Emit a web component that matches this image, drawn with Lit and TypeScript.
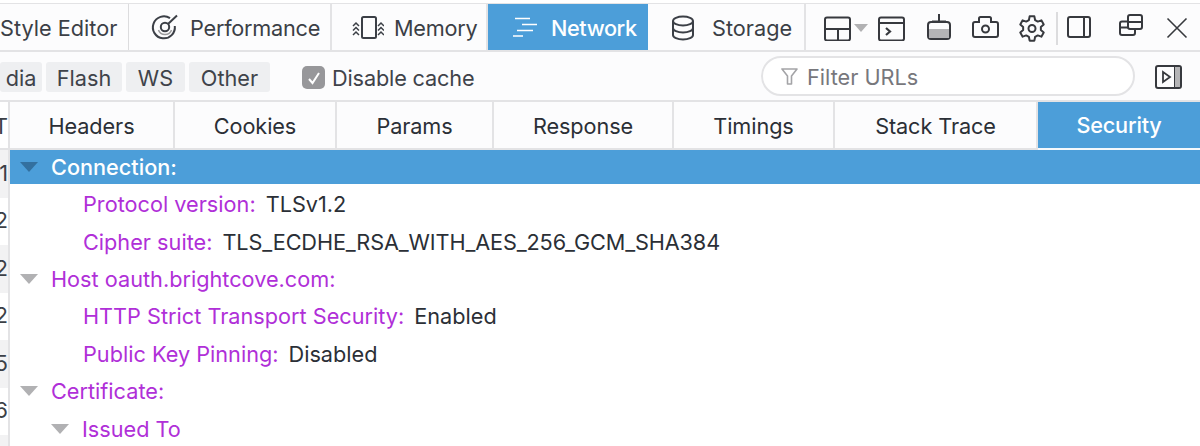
import { LitElement, html, css, svg } from 'lit';
import { customElement } from 'lit/decorators.js';

const icon = (w: number, h: number, body: unknown) => html`<svg width=${w} height=${h} viewBox="0 0 ${w} ${h}" fill="none" stroke="currentColor" stroke-width="2">${body}</svg>`;

// six rounded teeth round the centre of the settings icon
const gearPath = () => {
  const pt = (r: number, deg: number) => {
    const a = (deg * Math.PI) / 180;
    return `${(13 + r * Math.cos(a)).toFixed(2)} ${(13.5 + r * Math.sin(a)).toFixed(2)}`;
  };
  const parts: string[] = [];
  for (let i = 0; i < 6; i++) {
    const a = i * 60 - 90;
    parts.push(pt(9, a - 20), pt(12.4, a - 11), pt(12.4, a + 11), pt(9, a + 20));
  }
  return `M${parts.join('L')}Z`;
};

const chevrons = (x: number, dir: number) =>
  [8, 12.5, 17].map((y) => svg`<path d="M${x} ${y + 3}l${dir * 3} -3 ${dir * 3} 3" stroke-width="1.500"/>`);

const icons = {
  perf: icon(30, 30, svg`<path d="M20 5.200A11 11 0 1 0 24.800 13" /><circle cx="15" cy="14" r="4.200"/><path d="M18 11L27 2.500"/><path d="M8.500 17c1 3 3.500 4.500 6.500 4.500s5.500-1.500 6.500-4.500" stroke-width="1.500" stroke="#9a9a9c"/>`),
  memory: icon(34, 26, svg`<rect x="12" y="2" width="14" height="21" rx="1.500"/>${chevrons(3, 1)}${chevrons(28, 1)}`),
  network: icon(24, 22, svg`<path d="M2 1.500h15M9 7.500h15M4 13.500h16M0 19h10" stroke-width="1.600"/>`),
  storage: icon(24, 26, svg`<ellipse cx="12" cy="6" rx="10" ry="4.500"/><path d="M2 6v14c0 2.500 4.500 4.500 10 4.500s10-2 10-4.500V6M2 13c0 2.500 4.500 4.500 10 4.500s10-2 10-4.500"/>`),
  split: icon(28, 26, svg`<rect x="1" y="2.500" width="25" height="23" rx="2"/><path d="M1 14h25M14 14v11"/>`),
  console: icon(28, 26, svg`<rect x="1" y="2.500" width="25" height="23" rx="2"/><path d="M1 8h25"/><path d="M8 13l4 3.500-4 3.500" stroke-width="2.200"/>`),
  paint: icon(24, 28, svg`<path d="M12 0v8M5 7.500h14"/><rect x="1" y="8" width="22" height="17" rx="3"/><rect x="2" y="15" width="20" height="9" fill="#b4b4b6" stroke="none"/>`),
  camera: icon(28, 26, svg`<path d="M3 7h4V3.500A1.500 1.500 0 0 1 8.500 2h9A1.500 1.500 0 0 1 19 3.500V7h5a2 2 0 0 1 2 2v11a2 2 0 0 1-2 2H3a2 2 0 0 1-2-2V9a2 2 0 0 1 2-2z"/><circle cx="13.500" cy="14" r="3.500"/>`),
  gear: icon(26, 27, svg`<path d=${gearPath()} stroke-linejoin="round"/><circle cx="13" cy="13.500" r="3.500"/>`),
  dock: icon(24, 24, svg`<rect x="1" y="1" width="22" height="20" rx="2"/><path d="M17 1v20"/>`),
  windows: icon(24, 28, svg`<rect x="9" y="1" width="14" height="14" rx="2"/><path d="M9 8h14"/><path d="M9 7.500H3a2 2 0 0 0-2 2V19a2 2 0 0 0 2 2h11a2 2 0 0 0 2-2v-4M1 13.500h8"/>`),
  close: icon(22, 22, svg`<path d="M1.500 1.500l19 19M20.500 1.500l-19 19" stroke-width="1.600"/>`),
  funnel: icon(18, 20, svg`<path d="M1 2h15l-5.500 7v8h-4V9z" stroke-width="1.600" stroke-linejoin="round"/>`),
  sidebar: icon(28, 26, svg`<rect x="1" y="2" width="25" height="22" rx="2"/><path d="M20 2v22"/><rect x="20" y="3" width="5" height="20" fill="#b4b4b6" stroke="none"/><path d="M8 8l7 5-7 5z" stroke-width="1.800"/>`),
  check: icon(14, 14, svg`<path d="M2 8l3.500 4L12 2" stroke="#fff" stroke-width="2"/>`),
};

const mainTabs = [
  { label: 'Performance', w: 203, pad: 21, gap: 10, ic: icons.perf },
  { label: 'Memory', w: 156, pad: 18, gap: 10, ic: icons.memory },
  { label: 'Network', w: 160, pad: 25, gap: 14, ic: icons.network, on: true },
  { label: 'Storage', w: 156, pad: 23, gap: 17, ic: icons.storage },
];

const subTabs = [
  ['Headers', 165], ['Cookies', 162], ['Params', 157], ['Response', 180], ['Timings', 161], ['Stack Trace', 203], ['Security', 162],
] as const;

const gutter = [
  ['1', true], ['2', false], ['2', true], ['2', false], ['5', true], ['6', false], ['', true],
] as const;

@customElement('app-root')
export class AppRoot extends LitElement {
  static styles = css`
    :host {
      display: block;
      width: 1200px;
      height: 446px;
      overflow: hidden;
      background: #fff;
      font-family: Inter, "Liberation Sans", sans-serif;
      font-size: 21.7px;
      color: #2b2f36;
    }
    .toolbar {
      display: flex;
      align-items: stretch;
      height: 46px;
      margin-top: 3px;
      border-top: 1px solid #e3e3e5;
      border-bottom: 2px solid #e3e3e5;
      background: #fcfcfd;
    }
    .tab0 { width: 128px; display: flex; align-items: center; padding-top: 2px; border-right: 1px solid #dcdcde; white-space: nowrap; color: #3b3f46; }
    .tab {
      display: flex;
      align-items: center;
      box-sizing: border-box;
      padding-top: 2px;
      border-right: 2px solid #e3e3e5;
      color: #3b3f46;
      white-space: nowrap;
      letter-spacing: -0.25px;
    }
    .tab.plain { border-right: none; letter-spacing: 0; }
    .tab.on { background: #4c9ed9; color: #fff; border-right: none; font-weight: 500; letter-spacing: -0.4px; }
    .tools {
      display: flex;
      align-items: center;
      flex: 1;
      padding: 2px 0 0 18px;
      color: #37393e;
      border-left: 2px solid #e3e3e5;
    }
    .tools span { display: flex; }
    .tools span.drop { width: 0; height: 0; margin: 0 10px 0 2px; border: 7px solid transparent; border-top: 8px solid #b1b1b3; border-bottom: 0; }
    .g19 { margin-left: 19px; }
    .g21 { margin-left: 21px; }
    .g23 { margin-left: 23px; }
    .g28 { margin-left: 28px; }
    .tools span.divider { width: 2px; height: 33px; margin: 0 9px 0 11px; background: #dcdcde; }
    .filters {
      display: flex;
      align-items: center;
      height: 46px;
      padding-top: 2px;
      border-bottom: 2px solid #e3e3e5;
      background: #fcfcfd;
    }
    .chip {
      display: flex;
      align-items: center;
      justify-content: center;
      height: 30px;
      box-sizing: border-box;
      margin-right: 4px;
      padding-top: 1px;
      background: #eeeff1;
      border-radius: 3px;
      color: #3f434a;
    }
    .cache { display: flex; align-items: center; gap: 7px; margin-left: 28px; padding-top: 1px; color: #3f434a; letter-spacing: -0.15px; }
    .box { display: flex; align-items: center; justify-content: center; width: 23px; height: 23px; background: #97979a; border-radius: 5px; }
    .search {
      display: flex;
      align-items: center;
      gap: 8px;
      width: 374px;
      height: 40px;
      box-sizing: border-box;
      margin: 0 0 2px auto;
      padding: 2px 0 0 18px;
      border: 2px solid #e3e3e5;
      border-radius: 20px;
      background: #fff;
      color: #77777c;
    }
    .search svg { color: #a4a4a7; }
    .side { display: flex; margin: 0 17px 0 20px; color: #37393e; }
    .body { display: flex; }
    .gutter { width: 8px; border-right: 2px solid #e3e3e5; overflow: hidden; flex: none; }
    .gutter div { display: flex; justify-content: flex-end; align-items: center; height: 47.500px; width: 8px; line-height: 1; color: #3b3f46; }
    .gutter .head { height: 42px; padding-top: 4px; border-bottom: 2px solid #e3e3e5; }
    .gutter .odd { background: #f2f2f3; }
    .pane { flex: 1; min-width: 0; }
    .subtabs { display: flex; height: 46px; border-bottom: 2px solid #e3e3e5; background: #fcfcfd; }
    .sub {
      display: flex;
      align-items: center;
      justify-content: center;
      box-sizing: border-box;
      padding-top: 2px;
      border-right: 2px solid #e3e3e5;
      color: #2b2f36;
      letter-spacing: -0.1px;
    }
    .sub.on { height: 48px; margin-bottom: -2px; padding: 0 0 1px; background: #4c9ed9; color: #fff; border-right: none; border-bottom: 2px solid #f4f8fc; font-weight: 500; letter-spacing: -0.2px; }
    .list { padding-top: 1.500px; }
    .row { display: flex; align-items: center; height: 37.400px; white-space: nowrap; }
    .row.sel { height: 34px; background: #4c9ed9; color: #fff; font-weight: 500; }
    .row.sel .key { color: #fff; }
    .row.sel .tri { border-top-color: #33709f; }
    .l0 { padding-left: 10px; }
    .l1 { padding-left: 41px; }
    .l1.kid { padding-left: 73px; }
    .tri { flex: none; width: 0; height: 0; margin-right: 13px; border: 9px solid transparent; border-top: 10px solid #b1b1b3; border-bottom: 0; }
    .key { color: #b02fd8; }
    .val { margin-left: 10px; color: #2b2f36; }
    .cipher { letter-spacing: -0.12px; }
  `;

  private row(level: string, key: string, val?: string, open = false, valClass = '') {
    return html`<div class="row ${level}">
      ${open ? html`<span class="tri"></span>` : ''}
      <span class="key">${key}</span>
      ${val ? html`<span class="val ${valClass}">${val}</span>` : ''}
    </div>`;
  }

  render() {
    return html`
      <div class="toolbar">
        <div class="tab0">Style Editor</div>
        ${mainTabs.map((t, i) => html`<div class="tab ${t.on ? 'on' : ''} ${i === 3 ? 'plain' : ''}" style="width:${t.w}px;padding-left:${t.pad}px;gap:${t.gap}px">${t.ic}<span>${t.label}</span></div>`)}
        <div class="tools">
          ${icons.split}<span class="drop"></span>${icons.console}
          <span class="g21">${icons.paint}</span>
          <span class="g21">${icons.camera}</span>
          <span class="g19">${icons.gear}</span>
          <span class="divider"></span>
          ${icons.dock}
          <span class="g28">${icons.windows}</span>
          <span class="g23">${icons.close}</span>
        </div>
      </div>
      <div class="filters">
        <div class="chip" style="width:42px">dia</div>
        <div class="chip" style="width:76px">Flash</div>
        <div class="chip" style="width:59px">WS</div>
        <div class="chip" style="width:81px">Other</div>
        <div class="cache"><span class="box">${icons.check}</span>Disable cache</div>
        <div class="search">${icons.funnel}<span>Filter URLs</span></div>
        <span class="side">${icons.sidebar}</span>
      </div>
      <div class="body">
        <div class="gutter">
          <div class="head">T</div>
          ${gutter.map(([n, odd]) => html`<div class=${odd ? 'odd' : ''}>${n}</div>`)}
        </div>
        <div class="pane">
          <div class="subtabs">
            ${subTabs.map(([label, w], i) => html`<div class="sub ${i === 6 ? 'on' : ''}" style="width:${w}px">${label}</div>`)}
          </div>
          ${this.row('l0 sel', 'Connection:', undefined, true)}
          <div class="list">
            ${this.row('l1 kid', 'Protocol version:', 'TLSv1.2')}
            ${this.row('l1 kid', 'Cipher suite:', 'TLS_ECDHE_RSA_WITH_AES_256_GCM_SHA384', false, 'cipher')}
            ${this.row('l0', 'Host oauth.brightcove.com:', undefined, true)}
            ${this.row('l1 kid', 'HTTP Strict Transport Security:', 'Enabled')}
            ${this.row('l1 kid', 'Public Key Pinning:', 'Disabled')}
            ${this.row('l0', 'Certificate:', undefined, true)}
            ${this.row('l1', 'Issued To', undefined, true)}
          </div>
        </div>
      </div>
    `;
  }
}
